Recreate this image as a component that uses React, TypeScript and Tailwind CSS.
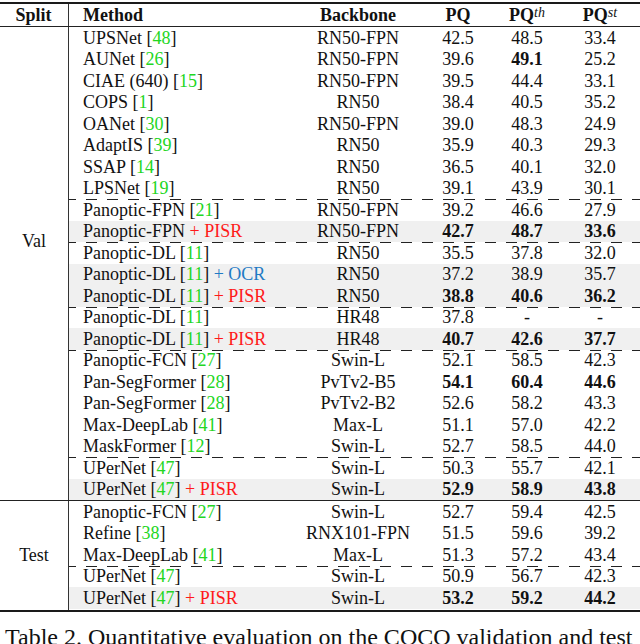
import React from "react";

interface Row {
  name: string;
  cite?: string;
  extra?: "PISR" | "OCR";
  backbone: string;
  pq: string;
  th: string;
  st: string;
  bold?: string; // "111" = pq, th, st bold
  dash?: boolean; // dashed rule above the row
}

const valRows: Row[] = [
  { name: "UPSNet", cite: "48", backbone: "RN50-FPN", pq: "42.5", th: "48.5", st: "33.4" },
  { name: "AUNet", cite: "26", backbone: "RN50-FPN", pq: "39.6", th: "49.1", st: "25.2", bold: "010" },
  { name: "CIAE (640)", cite: "15", backbone: "RN50-FPN", pq: "39.5", th: "44.4", st: "33.1" },
  { name: "COPS", cite: "1", backbone: "RN50", pq: "38.4", th: "40.5", st: "35.2" },
  { name: "OANet", cite: "30", backbone: "RN50-FPN", pq: "39.0", th: "48.3", st: "24.9" },
  { name: "AdaptIS", cite: "39", backbone: "RN50", pq: "35.9", th: "40.3", st: "29.3" },
  { name: "SSAP", cite: "14", backbone: "RN50", pq: "36.5", th: "40.1", st: "32.0" },
  { name: "LPSNet", cite: "19", backbone: "RN50", pq: "39.1", th: "43.9", st: "30.1" },
  { name: "Panoptic-FPN", cite: "21", backbone: "RN50-FPN", pq: "39.2", th: "46.6", st: "27.9", dash: true },
  { name: "Panoptic-FPN", extra: "PISR", backbone: "RN50-FPN", pq: "42.7", th: "48.7", st: "33.6", bold: "111" },
  { name: "Panoptic-DL", cite: "11", backbone: "RN50", pq: "35.5", th: "37.8", st: "32.0", dash: true },
  { name: "Panoptic-DL", cite: "11", extra: "OCR", backbone: "RN50", pq: "37.2", th: "38.9", st: "35.7" },
  { name: "Panoptic-DL", cite: "11", extra: "PISR", backbone: "RN50", pq: "38.8", th: "40.6", st: "36.2", bold: "111" },
  { name: "Panoptic-DL", cite: "11", backbone: "HR48", pq: "37.8", th: "-", st: "-", dash: true },
  { name: "Panoptic-DL", cite: "11", extra: "PISR", backbone: "HR48", pq: "40.7", th: "42.6", st: "37.7", bold: "111" },
  { name: "Panoptic-FCN", cite: "27", backbone: "Swin-L", pq: "52.1", th: "58.5", st: "42.3", dash: true },
  { name: "Pan-SegFormer", cite: "28", backbone: "PvTv2-B5", pq: "54.1", th: "60.4", st: "44.6", bold: "111" },
  { name: "Pan-SegFormer", cite: "28", backbone: "PvTv2-B2", pq: "52.6", th: "58.2", st: "43.3" },
  { name: "Max-DeepLab", cite: "41", backbone: "Max-L", pq: "51.1", th: "57.0", st: "42.2" },
  { name: "MaskFormer", cite: "12", backbone: "Swin-L", pq: "52.7", th: "58.5", st: "44.0" },
  { name: "UPerNet", cite: "47", backbone: "Swin-L", pq: "50.3", th: "55.7", st: "42.1", dash: true },
  { name: "UPerNet", cite: "47", extra: "PISR", backbone: "Swin-L", pq: "52.9", th: "58.9", st: "43.8", bold: "111" },
];

const testRows: Row[] = [
  { name: "Panoptic-FCN", cite: "27", backbone: "Swin-L", pq: "52.7", th: "59.4", st: "42.5" },
  { name: "Refine", cite: "38", backbone: "RNX101-FPN", pq: "51.5", th: "59.6", st: "39.2" },
  { name: "Max-DeepLab", cite: "41", backbone: "Max-L", pq: "51.3", th: "57.2", st: "43.4" },
  { name: "UPerNet", cite: "47", backbone: "Swin-L", pq: "50.9", th: "56.7", st: "42.3", dash: true },
  { name: "UPerNet", cite: "47", extra: "PISR", backbone: "Swin-L", pq: "53.2", th: "59.2", st: "44.2", bold: "111" },
];

const DashLine = () => (
  <div className="relative z-10 -mb-px h-px bg-[repeating-linear-gradient(to_right,#222_0px,#222_11px,transparent_11px,transparent_21px)] bg-[position:-4px_0]" />
);

const TableRow: React.FC<{ row: Row }> = ({ row }) => {
  const b = row.bold ?? "000";
  return (
    <>
      {row.dash && <DashLine />}
      <div className={`flex h-[21.5px] items-center ${row.extra ? "bg-[#f0f0f0]" : ""}`}>
        <div className="w-[221px] whitespace-nowrap pl-[14px]">
          {row.name}
          {row.cite && (
            <>
              {" "}
              [<span className="text-[#22d622]">{row.cite}</span>]
            </>
          )}
          {row.extra === "PISR" && <span className="text-[#ff1a1a]"> + PISR</span>}
          {row.extra === "OCR" && <span className="text-[#1f7ac4]"> + OCR</span>}
        </div>
        <div className="w-[136px] text-center">{row.backbone}</div>
        <div className={`w-[64px] text-center ${b[0] === "1" ? "font-bold" : ""}`}>{row.pq}</div>
        <div className={`w-[74px] text-center ${b[1] === "1" ? "font-bold" : ""}`}>{row.th}</div>
        <div className={`w-[72px] text-center ${b[2] === "1" ? "font-bold" : ""}`}>{row.st}</div>
      </div>
    </>
  );
};

export default function App() {
  return (
    <div className="h-[644px] w-[640px] overflow-hidden bg-white pt-[2px] font-['Liberation_Serif',serif] text-[18px] leading-none text-[#111]">
      {/* top rule */}
      <div className="h-[2px] bg-[#1a1a1a]" />

      {/* header */}
      <div className="flex h-[22px] items-center font-bold">
        <div className="flex h-full w-[69px] items-center justify-center border-r border-[#333] pr-px">Split</div>
        <div className="w-[221px] pl-[14px]">Method</div>
        <div className="w-[136px] text-center">Backbone</div>
        <div className="w-[64px] text-center">PQ</div>
        <div className="w-[74px] text-center">
          PQ<sup className="relative -top-[4px] text-[14px] font-normal italic">th</sup>
        </div>
        <div className="w-[72px] text-center">
          PQ<sup className="relative -top-[4px] text-[14px] font-normal italic">st</sup>
        </div>
      </div>
      <div className="h-px bg-[#222]" />

      {/* Val */}
      <div className="flex">
        <div className="w-[69px] shrink-0 border-r border-[#333] pt-[205px] text-center">Val</div>
        <div className="flex-1">
          {valRows.map((r, i) => (
            <TableRow key={i} row={r} />
          ))}
        </div>
      </div>
      <div className="h-px bg-[#222]" />

      {/* Test */}
      <div className="flex">
        <div className="flex w-[69px] shrink-0 items-center justify-center border-r border-[#333]">Test</div>
        <div className="flex-1 pb-[1px]">
          {testRows.map((r, i) => (
            <TableRow key={i} row={r} />
          ))}
        </div>
      </div>
      <div className="h-[2px] bg-[#1a1a1a]" />

      {/* caption */}
      <p className="mt-[13px] whitespace-nowrap pl-[5px] text-[24px]">
        Table 2. Quantitative evaluation on the COCO validation and test
      </p>
    </div>
  );
}
